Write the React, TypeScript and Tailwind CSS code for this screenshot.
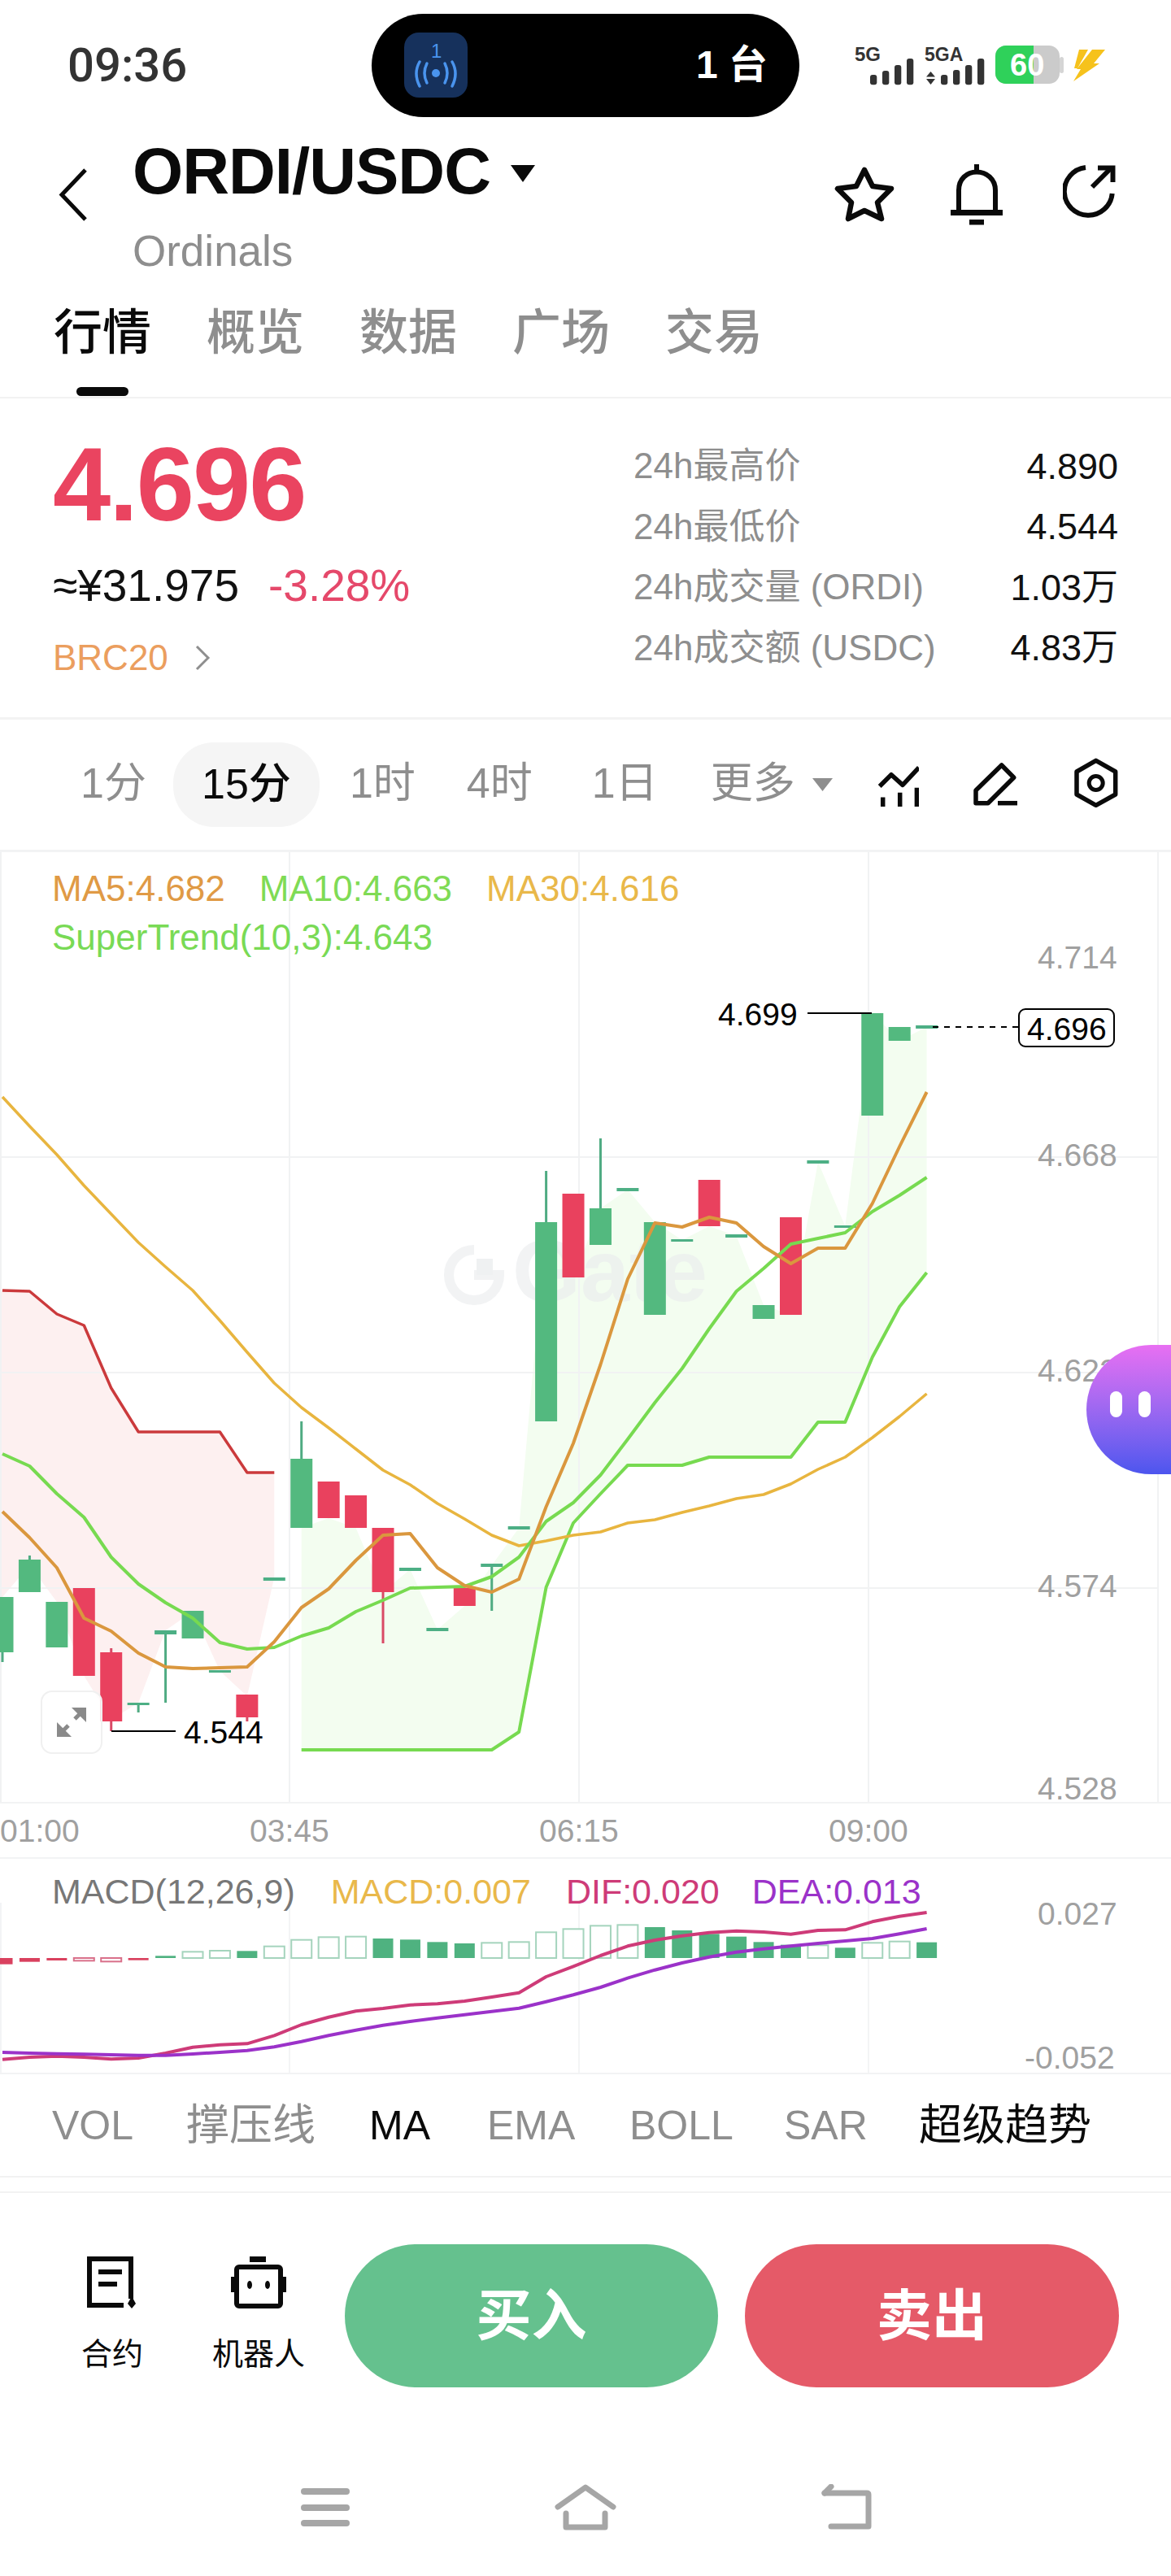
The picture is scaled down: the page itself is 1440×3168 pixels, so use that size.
const cx = (i: number) => 3 + 33.43 * i;

// i, bodyTop, bodyBottom, colour, wickTop, wickBottom
type Candle = [number, number, number, 'g' | 'r' | 'd', number?, number?];

const candles: Candle[] = [
  [0, 1964, 2032, 'g', 1964, 2044],
  [1, 1918, 1958, 'g', 1913, 1958],
  [2, 1970, 2026, 'g'],
  [3, 1953, 2061, 'r'],
  [4, 2032, 2117, 'r', 2027, 2129],
  [5, 2094, 2097, 'd', 2094, 2106],
  [6, 2005, 2010, 'd', 2005, 2094],
  [7, 1981, 2015, 'g'],
  [8, 2054, 2057, 'd'],
  [9, 2084, 2112, 'r', 2084, 2117],
  [10, 1940, 1944, 'd'],
  [11, 1794, 1879, 'g', 1748, 1794],
  [12, 1822, 1867, 'r'],
  [13, 1839, 1879, 'r'],
  [14, 1879, 1958, 'r', 1879, 2021],
  [15, 1928, 1932, 'd'],
  [16, 2002, 2006, 'd'],
  [17, 1953, 1975, 'r'],
  [18, 1923, 1927, 'd', 1923, 1981],
  [19, 1877, 1881, 'd'],
  [20, 1503, 1748, 'g', 1440, 1503],
  [21, 1468, 1571, 'r'],
  [22, 1486, 1531, 'g', 1400, 1486],
  [23, 1461, 1465, 'd'],
  [24, 1503, 1617, 'g'],
  [25, 1524, 1527, 'd'],
  [26, 1451, 1508, 'r'],
  [27, 1518, 1522, 'd'],
  [28, 1605, 1622, 'g'],
  [29, 1497, 1617, 'r'],
  [30, 1427, 1431, 'd'],
  [31, 1507, 1510, 'd'],
  [32, 1246, 1372, 'g'],
  [33, 1263, 1280, 'g'],
  [34, 1261, 1265, 'd'],
];

const ma5 = [1859, 1891, 1928, 1990, 2006, 2033, 2050, 2052, 2051, 2050, 2019, 1977, 1954, 1919, 1888, 1886, 1928, 1950, 1958, 1942, 1853, 1775, 1678, 1573, 1504, 1509, 1497, 1504, 1533, 1554, 1535, 1535, 1480, 1410, 1343];
const ma10 = [1788, 1803, 1837, 1866, 1915, 1948, 1971, 1990, 2020, 2028, 2026, 2012, 2002, 1982, 1968, 1953, 1952, 1951, 1939, 1915, 1871, 1848, 1814, 1770, 1725, 1683, 1634, 1588, 1560, 1530, 1523, 1516, 1490, 1470, 1448];
const ma30 = [1349, 1385, 1420, 1458, 1493, 1528, 1558, 1587, 1624, 1663, 1701, 1731, 1756, 1782, 1808, 1826, 1849, 1868, 1888, 1901, 1895, 1888, 1884, 1873, 1869, 1860, 1852, 1843, 1838, 1825, 1807, 1792, 1768, 1742, 1714];

const stRed = [1587, 1588, 1616, 1630, 1707, 1761, 1761, 1761, 1761, 1811, 1811];
const redFillBottom = [1964, 1925, 1970, 2061, 2115, 2094, 2005, 1982, 2055, 2086, 1940];
// supertrend up leg starts at candle 11
const stGreen = [2152, 2152, 2152, 2152, 2152, 2152, 2152, 2152, 2130, 1952, 1873, 1837, 1802, 1802, 1802, 1792, 1792, 1792, 1792, 1749, 1749, 1669, 1607, 1565];
const greenFillTop = [1879, 1867, 1879, 1958, 1930, 2004, 1975, 1925, 1879, 1503, 1571, 1486, 1463, 1503, 1525, 1508, 1520, 1605, 1617, 1429, 1508, 1246, 1280, 1263];

// macd bars: top of bar in zoomed units, h = hollow
const bars: [number, boolean][] = [
  [461, true], [437, true], [427, true], [425, true], [432, false], [436, false], [445, false], [450, false], [448, true], [445, true], [409, true], [397, true], [385, true], [382, true], [390, false], [402, false], [415, false], [425, false], [445, false], [455, false], [457, true], [466, false], [448, true], [443, true], [446, false],
];
const redBars: [number, number, boolean][] = [
  [0, 527, false], [1, 518, false], [2, 513, false], [3, 514, true], [4, 517, true], [5, 512, false],
];
const greenEarly: [number, number, boolean][] = [
  [6, 496, false], [7, 481, true], [8, 477, true], [9, 478, false],
];
const dif = [878, 870, 866, 870, 877, 873, 855, 833, 824, 820, 790, 750, 722, 700, 690, 677, 673, 663, 648, 632, 573, 535, 495, 460, 438, 422, 410, 404, 408, 416, 402, 400, 370, 350, 336];
const dea = [852, 855, 857, 859, 861, 863, 863, 858, 852, 845, 832, 812, 790, 770, 752, 738, 725, 713, 701, 689, 665, 640, 612, 578, 548, 522, 500, 482, 470, 460, 450, 441, 432, 415, 396];

const toY = (v: number) => 2240 + v / 3;
const pts = (ys: number[], start = 0) => ys.map((y, i) => `${cx(i + start).toFixed(1)},${y}`).join(' ');

const StatRow = ({ label, value }: { label: string; value: string }) => (
  <div className="flex h-[74.5px] items-center justify-between">
    <span className="text-[44px] leading-none text-[#8e8e8e]">{label}</span>
    <span className="text-[45px] leading-none text-[#111]">{value}</span>
  </div>
);

const StatusIcons = () => (
  <svg width="340" height="80" viewBox="1040 40 340 80" className="ml-[57px]">
    <text x="1051" y="75" fontSize="24" fontWeight="700" fill="#333">5G</text>
    <text x="1137" y="75" fontSize="23" fontWeight="700" fill="#333">5GA</text>
    <g fill="#333">
      <rect x="1070" y="92" width="8.3" height="12.3" rx="3" />
      <rect x="1085" y="87" width="8.3" height="17.3" rx="3" />
      <rect x="1100" y="80" width="8.3" height="24.3" rx="3" />
      <rect x="1115" y="72" width="8.3" height="32.3" rx="3" />
      <rect x="1157" y="92" width="8.3" height="12.3" rx="3" />
      <rect x="1172" y="86" width="8.3" height="18.3" rx="3" />
      <rect x="1187" y="80" width="8.3" height="24.3" rx="3" />
      <rect x="1202" y="72" width="8.3" height="32.3" rx="3" />
      <polygon points="1144.5,88 1139,94.5 1150,94.5" />
      <polygon points="1139,97 1150,97 1144.5,104" />
    </g>
    <rect x="1224" y="56" width="79" height="47" rx="13" fill="#cbcbcb" />
    <rect x="1303" y="70" width="5" height="20" rx="2.5" fill="#d5d5d5" />
    <path d="M1271 56H1237a13 13 0 0 0-13 13v21a13 13 0 0 0 13 13h34z" fill="#2fd15a" />
    <text x="1242" y="93" fontSize="38" fontWeight="700" fill="#fff">60</text>
    <polygon points="1327,61 1338,61 1325,84 1321,84" fill="#f6c21c" />
    <polygon points="1343,61 1359,61 1345,78 1352,78 1320,100 1329,85 1324,85" fill="#f6c21c" />
  </svg>
);

const HeaderIcons = () => (
  <div className="ml-auto mr-[67px] mt-[42px] flex gap-[69px]">
    <svg width="74" height="76" viewBox="0 0 74 76" fill="none" stroke="#0a0a0a" strokeWidth="6.5" strokeLinejoin="round">
      <path d="M37 7L47 27L70 30L53 47L58 67L37 57L17 67L21 47L4 30L27 27Z" />
    </svg>
    <svg width="64" height="76" viewBox="0 0 64 76">
      <path d="M10 58V32C10 18 20 9.5 32 9.5C44 9.5 55 18 55 32V58" fill="none" stroke="#0a0a0a" strokeWidth="6" />
      <rect x="0" y="56" width="64" height="7" fill="#0a0a0a" />
      <rect x="23" y="68" width="18" height="6.5" fill="#0a0a0a" />
      <rect x="29" y="0" width="6" height="7" fill="#0a0a0a" />
    </svg>
    <svg width="66" height="76" viewBox="0 0 66 76" fill="none" stroke="#0a0a0a" strokeWidth="6" className="ml-[5px]">
      <path d="M28 4A29.5 29.5 0 1 0 60.7 36" />
      <path d="M36 28L59 5" />
      <path d="M43 4.5H61.5V22" />
    </svg>
  </div>
);

const tabs = ['概览', '数据', '广场', '交易'];

const Chart = () => (
  <div className="relative h-[1173px] border-b-2 border-t-[3px] border-[#f2f3f4]">
    <svg width="1440" height="1168" viewBox="0 1048 1440 1168" className="block overflow-visible">
      <polygon
        points={`0,1587 ${pts(stRed)} ${cx(10)},1940 ${redFillBottom.map((_, i) => `${cx(10 - i).toFixed(1)},${redFillBottom[10 - i]}`).join(' ')} 0,1964`}
        fill="#fdf0f0"
      />
      <polygon
        points={`${pts(stGreen, 11)} ${greenFillTop.map((_, i) => `${cx(34 - i).toFixed(1)},${greenFillTop[23 - i]}`).join(' ')}`}
        fill="#f3fdf0"
      />
      <g stroke="#f1f2f3" strokeWidth="2">
        <line x1="0" y1="1423" x2="1424" y2="1423" />
        <line x1="0" y1="1688" x2="1424" y2="1688" />
        <line x1="0" y1="1953" x2="1424" y2="1953" />
        <line x1="1" y1="1048" x2="1" y2="2216" />
        <line x1="356" y1="1048" x2="356" y2="2216" />
        <line x1="712" y1="1048" x2="712" y2="2216" />
        <line x1="1068" y1="1048" x2="1068" y2="2216" />
        <line x1="1424" y1="1048" x2="1424" y2="2216" />
      </g>
      {/* watermark */}
      <g opacity="0.6">
        <path d="M583 1537A31 31 0 1 0 614 1568H583" fill="none" stroke="#eaecee" strokeWidth="12" />
        <rect x="586" y="1548" width="20" height="20" fill="#e6e9eb" />
        <text x="630" y="1600" fontSize="108" fontWeight="700" fill="#eaecee">Gate</text>
      </g>
      {candles.map(([i, top, bottom, kind, wTop, wBot]) => {
        const color = kind === 'r' ? '#e9415e' : kind === 'g' ? '#53b97f' : '#4daf85';
        const wick = kind === 'r' ? '#d94a66' : '#4fab82';
        return (
          <g key={i}>
            {wTop !== undefined && <line x1={cx(i)} x2={cx(i)} y1={wTop} y2={wBot} stroke={wick} strokeWidth="3" />}
            <rect x={cx(i) - 13.5} y={top} width="27" height={bottom - top} fill={color} />
          </g>
        );
      })}
      <g fill="none" strokeLinejoin="round">
        <polyline points={pts(stRed)} stroke="#cb3a3c" strokeWidth="3.5" />
        <polyline points={pts(stGreen, 11)} stroke="#77da50" strokeWidth="4" />
        <polyline points={pts(ma30)} stroke="#e8b53f" strokeWidth="3.5" />
        <polyline points={pts(ma10)} stroke="#77da50" strokeWidth="4" />
        <polyline points={pts(ma5)} stroke="#da973e" strokeWidth="4" />
      </g>
      <g fontSize="39" fill="#a0a0a0">
        <text x="1276" y="1191">4.714</text>
        <text x="1276" y="1434">4.668</text>
        <text x="1276" y="1699">4.622</text>
        <text x="1276" y="1964">4.574</text>
        <text x="1276" y="2213">4.528</text>
      </g>
      <g fontSize="39" fill="#000">
        <text x="883" y="1261">4.699</text>
        <line x1="993" y1="1246" x2="1072" y2="1246" stroke="#000" strokeWidth="2" />
        <line x1="1147" y1="1263" x2="1252" y2="1263" stroke="#000" strokeWidth="2" strokeDasharray="7 7" />
        <rect x="1253" y="1241" width="117" height="46" rx="8" fill="#fff" stroke="#000" strokeWidth="2" />
        <text x="1263" y="1279">4.696</text>
        <line x1="137" y1="2129" x2="216" y2="2129" stroke="#000" strokeWidth="2" />
        <text x="226" y="2144">4.544</text>
      </g>
    </svg>
    <div className="absolute left-[64px] top-[15px] text-[44px] leading-[60px]">
      <div className="flex gap-[42px]">
        <span className="text-[#e09a45]">MA5:4.682</span>
        <span className="text-[#7fdb55]">MA10:4.663</span>
        <span className="text-[#e9b84a]">MA30:4.616</span>
      </div>
      <div className="text-[#79da55]">SuperTrend(10,3):4.643</div>
    </div>
    <div className="absolute left-[50px] top-[1031px] flex h-[78px] w-[76px] items-center justify-center rounded-[14px] border-2 border-[#f0f0f0] bg-white/80">
      <svg width="38" height="38" viewBox="0 0 38 38">
        <polygon points="19,1 37,1 37,19" fill="#8a8a8a" />
        <polygon points="1,19 1,37 19,37" fill="#8a8a8a" />
        <line x1="7" y1="31" x2="15" y2="23" stroke="#8a8a8a" strokeWidth="5" />
        <line x1="23" y1="15" x2="31" y2="7" stroke="#8a8a8a" strokeWidth="5" />
      </svg>
    </div>
    <div className="absolute right-0 top-[606px] flex h-[159px] w-[104px] items-center gap-[20px] rounded-l-[80px] bg-gradient-to-b from-[#e86ff2] to-[#4c55ee] pb-[14px] pl-[29px]">
      <span className="h-[32px] w-[15px] rounded-full bg-white" />
      <span className="h-[32px] w-[15px] rounded-full bg-white" />
    </div>
  </div>
);

const Macd = () => (
  <div className="relative h-[267px] border-b-2 border-t-2 border-[#f2f3f4]">
    <svg width="1440" height="263" viewBox="0 2286 1440 263" className="block overflow-visible">
      <g stroke="#f3f4f5" strokeWidth="2">
        <line x1="1" y1="2340" x2="1" y2="2549" />
        <line x1="356" y1="2340" x2="356" y2="2549" />
        <line x1="712" y1="2340" x2="712" y2="2549" />
        <line x1="1068" y1="2340" x2="1068" y2="2549" />
      </g>
      {redBars.map(([i, b, hollow]) => (
        <rect
          key={i}
          x={cx(i) - 12.5}
          y="2408"
          width="25"
          height={toY(b) - 2408}
          fill={hollow ? '#fff' : '#d9415f'}
          stroke={hollow ? '#d9708a' : 'none'}
          strokeWidth="2"
        />
      ))}
      {[...greenEarly, ...bars.map(([t, h], n): [number, number, boolean] => [10 + n, t, h])].map(([i, t, hollow]) => (
        <rect
          key={i}
          x={cx(i) - 12.5}
          y={toY(t)}
          width="25"
          height={2408 - toY(t)}
          fill={hollow ? '#fff' : '#4fb280'}
          stroke={hollow ? '#a5d4bd' : 'none'}
          strokeWidth="2"
        />
      ))}
      <g fill="none" strokeLinejoin="round" strokeWidth="4">
        <polyline points={dif.map((v, i) => `${cx(i).toFixed(1)},${toY(v).toFixed(1)}`).join(' ')} stroke="#ce3b78" />
        <polyline points={dea.map((v, i) => `${cx(i).toFixed(1)},${toY(v).toFixed(1)}`).join(' ')} stroke="#9b32c9" />
      </g>
      <g fontSize="39" fill="#a0a0a0">
        <text x="1276" y="2367">0.027</text>
        <text x="1260" y="2544">-0.052</text>
      </g>
    </svg>
    <div className="absolute left-[64px] top-[10px] flex text-[43px] leading-[60px]">
      <span className="text-[#777]">MACD(12,26,9)</span>
      <span className="ml-[44px] text-[#e9b84a]">MACD:0.007</span>
      <span className="ml-[43px] text-[#ce3b78]">DIF:0.020</span>
      <span className="ml-[40px] text-[#9b32c9]">DEA:0.013</span>
    </div>
  </div>
);

export default function App() {
  return (
    <div className="relative h-[3168px] w-[1440px] overflow-hidden bg-white font-['Liberation_Sans','Noto_Sans_CJK_SC',sans-serif]">
      {/* status bar */}
      <div className="flex h-[160px] items-center pl-[83px]">
        <span className="w-[374px] font-['Roboto',sans-serif] text-[58px] font-medium leading-none text-[#333]">09:36</span>
        <div className="flex h-[127px] w-[526px] items-center justify-between rounded-full bg-black pl-[40px] pr-[39px]">
          <svg width="78" height="80" viewBox="0 0 78 80">
            <rect width="78" height="80" rx="18" fill="#16315c" />
            <text x="33" y="31" fontSize="24" fill="#4a94ee">1</text>
            <g fill="none" stroke="#4a94ee" strokeWidth="3.5" strokeLinecap="round">
              <circle cx="39" cy="50" r="5" fill="#4a94ee" stroke="none" />
              <path d="M28 38Q22 50 28 62" />
              <path d="M50 38Q56 50 50 62" />
              <path d="M19 36Q11 50 19 66" />
              <path d="M59 36Q67 50 59 66" />
            </g>
          </svg>
          <span className="text-[48px] font-semibold leading-none text-white">1 台</span>
        </div>
        <StatusIcons />
      </div>

      {/* header */}
      <div className="flex h-[210px] items-start pl-[72px]">
        <svg width="36" height="67" viewBox="0 0 36 67" fill="none" stroke="#0a0a0a" strokeWidth="5" className="mt-[46px]">
          <path d="M33 3L4 33.5L33 64" />
        </svg>
        <div className="ml-[55px] mt-[11px]">
          <div className="flex items-start">
            <span className="text-[80px] font-bold leading-[80px] tracking-[-1px] text-[#0a0a0a]">ORDI/USDC</span>
            <svg width="30" height="21" viewBox="0 0 30 21" className="ml-[25px] mt-[32px]">
              <polygon points="0,0 30,0 15,21" fill="#0a0a0a" />
            </svg>
          </div>
          <div className="mt-[28px] text-[53px] leading-[60px] text-[#8e8e8e]">Ordinals</div>
        </div>
        <HeaderIcons />
      </div>

      {/* tabs */}
      <div className="flex h-[120px] items-start gap-[68px] border-b-2 border-[#f2f2f2] pl-[66px] pt-[10px] text-[60px] font-medium leading-[60px] text-[#8e8e8e]">
        <div className="flex flex-col items-center text-[#0a0a0a]">
          <span>行情</span>
          <span className="mt-[36px] h-[11px] w-[64px] rounded-full bg-[#0a0a0a]" />
        </div>
        {tabs.map((t) => (
          <span key={t}>{t}</span>
        ))}
      </div>

      {/* price */}
      <div className="flex h-[395px] border-b-[3px] border-[#f3f3f3] pr-[65px]">
        <div className="w-[779px] pl-[65px] pt-[42px]">
          <div className="text-[128px] font-bold leading-[128px] tracking-[-2px] text-[#ea4460]">4.696</div>
          <div className="mt-[30px] flex gap-[36px] text-[55px] leading-[60px]">
            <span className="text-[#111]">≈¥31.975</span>
            <span className="text-[#e5486a]">-3.28%</span>
          </div>
          <div className="mt-[34px] flex items-center gap-[32px] text-[44px] leading-[50px] text-[#eb9e5e]">
            <span>BRC20</span>
            <svg width="20" height="32" viewBox="0 0 20 32" fill="none" stroke="#8e8e8e" strokeWidth="3">
              <path d="M3 2L17 16L3 30" />
            </svg>
          </div>
        </div>
        <div className="flex-1 pt-[46px]">
          <StatRow label="24h最高价" value="4.890" />
          <StatRow label="24h最低价" value="4.544" />
          <StatRow label="24h成交量 (ORDI)" value="1.03万" />
          <StatRow label="24h成交额 (USDC)" value="4.83万" />
        </div>
      </div>

      {/* intervals */}
      <div className="flex h-[160px] items-center pl-[99px] text-[52px] leading-none text-[#8e8e8e]">
        <span className="mb-[4px]">1分</span>
        <span className="ml-[33px] flex h-[104px] w-[180px] items-center justify-center rounded-[50px] bg-[#f5f5f5] pb-[2px] font-medium text-[#0a0a0a]">15分</span>
        <span className="mb-[4px] ml-[37px]">1时</span>
        <span className="mb-[4px] ml-[63px]">4时</span>
        <span className="mb-[4px] ml-[73px]">1日</span>
        <span className="mb-[4px] ml-[65px]">更多</span>
        <svg width="25" height="16" viewBox="0 0 25 16" className="ml-[21px]">
          <polygon points="0,0 25,0 12.5,16" fill="#8e8e8e" />
        </svg>
        <svg width="60" height="70" viewBox="0 0 60 70" fill="none" stroke="#0a0a0a" strokeWidth="5.5" className="mb-[6px] ml-[46px]">
          <path d="M11.7 40L26 25.7L40 38.4L60 17" strokeLinejoin="round" />
          <path d="M15.7 53.4V65M36.7 47.7V65M57.4 41.7V65" />
        </svg>
        <svg width="70" height="60" viewBox="0 0 70 60" fill="none" stroke="#0a0a0a" strokeWidth="5.5" className="mb-[6px] ml-[60px]">
          <path d="M41.7 9L56.7 24.3L25 55.7H10V40Z" strokeLinejoin="round" />
          <path d="M37 55.7H61" />
        </svg>
        <svg width="62" height="70" viewBox="0 0 62 70" fill="none" stroke="#0a0a0a" strokeWidth="5.5" className="mb-[4px] ml-[58px]">
          <path d="M29.7 7.3L53.7 21V49L29.7 62.3L6 49V21Z" strokeLinejoin="round" />
          <circle cx="29.7" cy="35" r="8.5" strokeWidth="5" />
        </svg>
      </div>

      <Chart />

      {/* time axis */}
      <div className="flex h-[66px] items-center text-[39px] leading-none text-[#a0a0a0]">
        <span className="w-[307px]">01:00</span>
        <span className="w-[356px]">03:45</span>
        <span className="w-[356px]">06:15</span>
        <span>09:00</span>
      </div>

      <Macd />

      {/* indicators */}
      <div className="grid h-[127px] grid-cols-[165px_225px_145px_175px_190px_166px_auto] items-center border-b-2 border-[#f2f2f2] pl-[64px] text-[50px] leading-none text-[#8e8e8e]">
        <span>VOL</span>
        <span className="text-[53px]">撑压线</span>
        <span className="text-[#0a0a0a]">MA</span>
        <span>EMA</span>
        <span>BOLL</span>
        <span>SAR</span>
        <span className="text-[53px] text-[#0a0a0a]">超级趋势</span>
      </div>
      <div className="h-[19px] border-b-2 border-[#f2f2f2]" />

      {/* bottom bar */}
      <div className="flex items-start pl-[88px] pt-[63px]">
        <div className="mt-[15px] flex w-[100px] flex-col items-center">
          <svg width="62" height="64" viewBox="0 0 62 64" fill="none" stroke="#0a0a0a" strokeWidth="6">
            <path d="M54 52V3H3V60H45" />
            <path d="M14 19H43M14 34H37" />
            <polygon points="55,49 60,58 55,64 50,58" fill="#0a0a0a" stroke="none" />
          </svg>
          <span className="mt-[34px] text-[38px] leading-[44px] text-[#0a0a0a]">合约</span>
        </div>
        <div className="ml-[70px] mt-[15px] flex w-[120px] flex-col items-center">
          <svg width="68" height="64" viewBox="0 0 68 64" fill="none" stroke="#0a0a0a" strokeWidth="6">
            <rect x="7" y="13" width="54" height="48" rx="3" />
            <rect x="23" y="0" width="20" height="7" fill="#0a0a0a" stroke="none" />
            <rect x="0" y="25" width="4" height="19" fill="#0a0a0a" stroke="none" />
            <rect x="64" y="25" width="4" height="19" fill="#0a0a0a" stroke="none" />
            <ellipse cx="23" cy="35" rx="3" ry="5" fill="#0a0a0a" stroke="none" />
            <ellipse cx="45" cy="35" rx="3" ry="5" fill="#0a0a0a" stroke="none" />
          </svg>
          <span className="mt-[34px] text-[38px] leading-[44px] text-[#0a0a0a]">机器人</span>
        </div>
        <button className="ml-[46px] h-[176px] w-[459px] rounded-full bg-[#65c18e] text-[68px] font-bold text-white">买入</button>
        <button className="ml-[33px] h-[176px] w-[460px] rounded-full bg-[#e55a68] text-[68px] font-bold text-white">卖出</button>
      </div>

      {/* nav */}
      <div className="mt-[119px] flex pl-[370px]">
        <div className="mt-[5px] flex h-[47px] w-[60px] flex-col justify-between">
          <span className="h-[8px] rounded-full bg-[#a6a6a6]" />
          <span className="h-[8px] rounded-full bg-[#a6a6a6]" />
          <span className="h-[8px] rounded-full bg-[#a6a6a6]" />
        </div>
        <svg width="76" height="57" viewBox="0 0 76 57" fill="none" stroke="#a6a6a6" strokeWidth="7" strokeLinecap="round" strokeLinejoin="round" className="ml-[252px]">
          <path d="M4 28L38 4L72 28" />
          <path d="M14 36V53H62V36" />
        </svg>
        <svg width="64" height="56" viewBox="0 0 64 56" fill="none" stroke="#a6a6a6" strokeWidth="7" strokeLinecap="round" strokeLinejoin="round" className="ml-[250px]">
          <path d="M6 11H58Q60 11 60 13V52H14" />
          <path d="M6 11L14 3" />
        </svg>
      </div>
    </div>
  );
}
